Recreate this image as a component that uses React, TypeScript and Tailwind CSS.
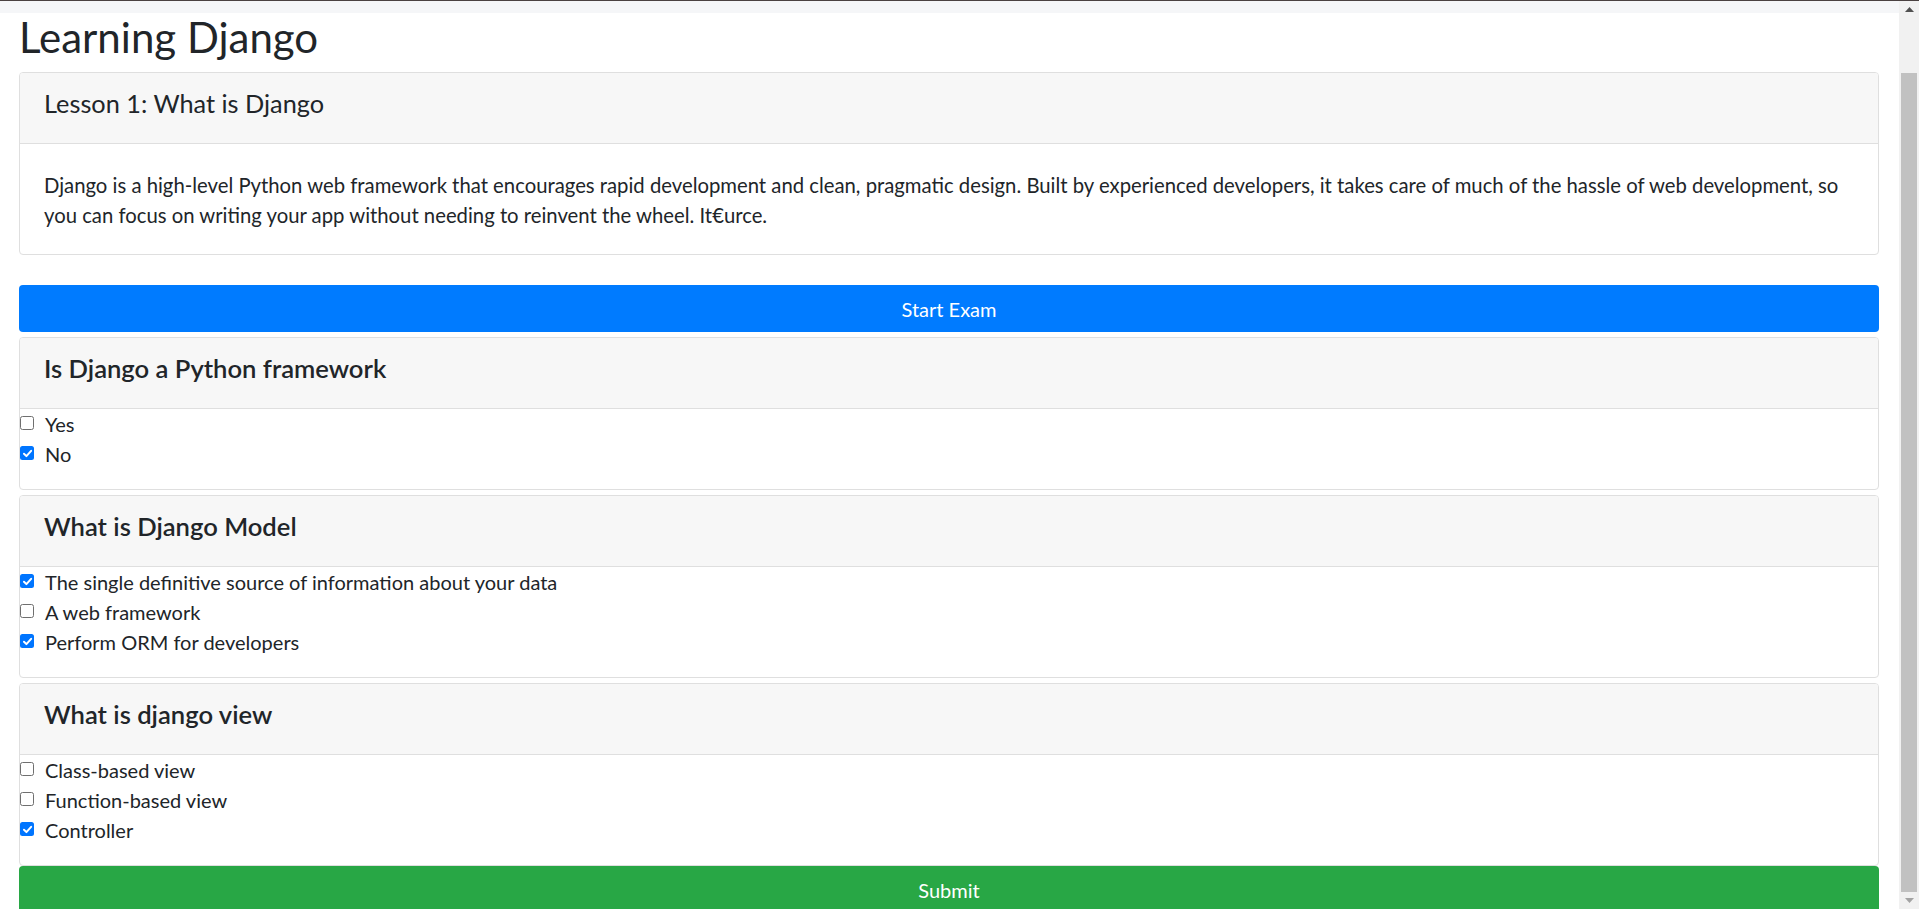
import type { ReactNode } from "react";

const questions = [
  {
    id: 1,
    title: "Is Django a Python framework",
    options: [
      { label: "Yes", checked: false },
      { label: "No", checked: true },
    ],
  },
  {
    id: 2,
    title: "What is Django Model",
    options: [
      { label: "The single definitive source of information about your data", checked: true },
      { label: "A web framework", checked: false },
      { label: "Perform ORM for developers", checked: true },
    ],
  },
  {
    id: 3,
    title: "What is django view",
    options: [
      { label: "Class-based view", checked: false },
      { label: "Function-based view", checked: false },
      { label: "Controller", checked: true },
    ],
  },
];

function Card({ title, strong, children }: { title: string; strong?: boolean; children: ReactNode }) {
  return (
    <div className="rounded-[4px] border border-[#dfdfdf] overflow-hidden bg-white">
      <div className="h-[71px] border-b border-[#dfdfdf] bg-[#f7f7f7] px-6 pt-4">
        <h3
          className={
            strong
              ? "text-[25.6px] leading-[29px] font-semibold"
              : "text-[25.3px] leading-[29px] font-normal"
          }
        >
          {title}
        </h3>
      </div>
      {children}
    </div>
  );
}

// native-looking checkbox, drawn so its size matches the screenshot
function Check({ checked }: { checked: boolean }) {
  return checked ? (
    <span className="mt-[7px] w-[14px] h-[14px] shrink-0 rounded-[2.5px] bg-[#0075ff] flex items-center justify-center">
      <svg width="11" height="11" viewBox="0 0 10 10">
        <path d="M1.8 5.2 L4 7.4 L8.3 2.6" fill="none" stroke="white" strokeWidth="1.8" strokeLinecap="round" strokeLinejoin="round" />
      </svg>
    </span>
  ) : (
    <span className="mt-[7px] w-[14px] h-[14px] shrink-0 rounded-[2.5px] border border-[#6f6f6f] bg-white" />
  );
}

function Scrollbar() {
  return (
    <div className="w-[20px] shrink-0 bg-[#f1f1f1] flex flex-col">
      <div className="h-[17px] flex items-center justify-center">
        <svg width="9" height="5" viewBox="0 0 9 5">
          <path d="M0 5 L4.5 0 L9 5 Z" fill="#505050" />
        </svg>
      </div>
      <div className="h-[55px]" />
      <div className="flex-1 mx-[2px] bg-[#c1c1c1]" />
      <div className="h-[17px] flex items-center justify-center">
        <svg width="9" height="5" viewBox="0 0 9 5">
          <path d="M0 0 L9 0 L4.5 5 Z" fill="#a3a3a3" />
        </svg>
      </div>
    </div>
  );
}

export default function App() {
  return (
    <div className="h-[909px] w-full overflow-hidden flex flex-col bg-white text-[#212529] font-[Lato,sans-serif]">
      <div className="h-[1px] shrink-0 bg-[#4a4141]" />
      <div className="flex-1 min-h-0 flex">
        <div className="flex-1 min-w-0 overflow-hidden">
          <div className="h-[12px] bg-[#f5f6f8]" />
          <main className="pl-[19px] pr-[20px]">
            <h1 className="text-[42px] leading-[48px] font-normal mb-[11px]">Learning Django</h1>

            <Card title="Lesson 1: What is Django">
              <p className="px-6 pt-[26px] pb-[24px] text-[20.3px] leading-[30px]">
                Django is a high-level Python web framework that encourages rapid development and clean, pragmatic
                design. Built by experienced developers, it takes care of much of the hassle of web development, so
                you can focus on writing your app without needing to reinvent the wheel. It€urce.
              </p>
            </Card>

            <button className="mt-[30px] w-full h-[47px] rounded-[4px] bg-[#007bff] text-white text-[20px] flex items-center justify-center">
              Start Exam
            </button>

            {questions.map((q) => (
              <div key={q.id} className="mt-[5px]">
                <Card title={q.title} strong>
                  <div className="pb-[20px]">
                    {q.options.map((o) => (
                      <label key={o.label} className="flex items-start text-[20px] leading-[30px]">
                        <Check checked={o.checked} />
                        <span className="ml-[11px]">{o.label}</span>
                      </label>
                    ))}
                  </div>
                </Card>
              </div>
            ))}

            <button className="w-full h-[47px] rounded-[4px] bg-[#28a745] text-white text-[20px] flex items-center justify-center">
              Submit
            </button>
          </main>
        </div>
        <Scrollbar />
      </div>
    </div>
  );
}
